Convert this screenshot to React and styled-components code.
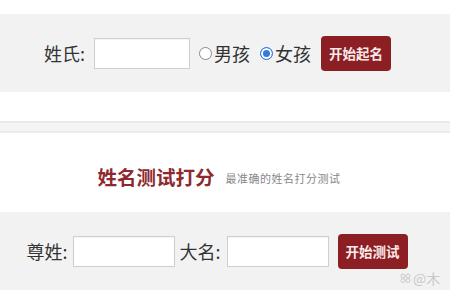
import React from "react";
import styled, { createGlobalStyle } from "styled-components";

const Global = createGlobalStyle`
  html, body { margin: 0; padding: 0; background: #ffffff; }
  body { font-family: "Noto Sans CJK SC", "Noto Sans", sans-serif; color: #333; }
  * { box-sizing: border-box; }
`;

const Page = styled.div`
  position: relative;
  width: 450px;
  height: 300px;
  overflow: hidden;
  padding-top: 14px;
`;

const Band = styled.div`
  height: 78px;
  background: #f2f2f2;
  display: flex;
  align-items: center;
  justify-content: center;
  padding-right: ${(p) => p.$shift || 15}px;
`;

const Spacer = styled.div`
  height: ${(p) => p.$h}px;
`;

const Divider = styled.div`
  height: 12px;
  background: #f4f4f4;
  border-top: 2px solid #e9e9e9;
  border-bottom: 2px solid #ececec;
`;

const TitleRow = styled.div`
  height: 79px;
  display: flex;
  align-items: center;
  justify-content: center;
  padding-right: 12px;
  padding-top: 8px;
`;

const Title = styled.span`
  font-size: 19.5px;
  font-weight: 700;
  color: #8d2a2f;
`;

const Subtitle = styled.span`
  font-size: 11px;
  color: #888;
  margin-left: 11px;
  margin-top: 3px;
  letter-spacing: 0.5px;
`;

const Label = styled.span`
  font-size: 18px;
  color: #333;
  line-height: 1;
  margin-right: ${(p) => p.$gap || 6}px;
`;

const TextInput = styled.div`
  width: ${(p) => p.$w || 96}px;
  height: 31px;
  background: #fff;
  border: 1px solid #cfcfcf;
  box-shadow: inset 0 1px 1px rgba(0, 0, 0, 0.04);
  margin-right: ${(p) => p.$mr || 9}px;
`;

const Radio = styled.span`
  width: 13px;
  height: 13px;
  border-radius: 50%;
  border: 1px solid ${(p) => (p.$on ? "#2f7be0" : "#8a8a8a")};
  background: ${(p) => (p.$on ? "#2f7be0" : "#fff")};
  box-shadow: ${(p) => (p.$on ? "inset 0 0 0 2px #fff" : "none")};
  margin-right: 2px;
  margin-top: 1px;
  flex: none;
`;

const RadioLabel = styled.span`
  font-size: 18px;
  line-height: 1;
  color: #333;
  margin-right: ${(p) => p.$mr || 10}px;
`;

const Button = styled.div`
  width: 70px;
  height: 35px;
  border-radius: 4px;
  background: #8b1f23;
  color: #fbeaea;
  font-size: 13.5px;
  font-weight: 700;
  display: flex;
  align-items: center;
  justify-content: center;
`;

const Watermark = styled.div`
  position: absolute;
  left: 400px;
  top: 268px;
  display: flex;
  align-items: center;
  gap: 2px;
  color: #c9c9c9;
  font-size: 14px;
  white-space: nowrap;
`;

export default function App() {
  return (
    <>
      <Global />
      <Page>
        <Band $shift={15}>
          <Label $gap={9}>姓氏:</Label>
          <TextInput $w={96} $mr={9} />
          <Radio />
          <RadioLabel $mr={10}>男孩</RadioLabel>
          <Radio $on />
          <RadioLabel $mr={10}>女孩</RadioLabel>
          <Button>开始起名</Button>
        </Band>
        <Spacer $h={29} />
        <Divider />
        <TitleRow>
          <Title>姓名测试打分</Title>
          <Subtitle>最准确的姓名打分测试</Subtitle>
        </TitleRow>
        <Band $shift={16}>
          <Label $gap={5}>尊姓:</Label>
          <TextInput $w={102} $mr={5} />
          <Label $gap={6}>大名:</Label>
          <TextInput $w={102} $mr={9} />
          <Button>开始测试</Button>
        </Band>
        <Watermark>
          <svg width="11" height="10" viewBox="0 0 11 10">
            <g fill="none" stroke="#c9c9c9" strokeWidth="1">
              <circle cx="3" cy="3" r="2" />
              <circle cx="8" cy="3" r="2" />
              <circle cx="3" cy="7.5" r="2" />
              <circle cx="8" cy="7.5" r="2" />
            </g>
          </svg>
          <span>@木</span>
        </Watermark>
      </Page>
    </>
  );
}
